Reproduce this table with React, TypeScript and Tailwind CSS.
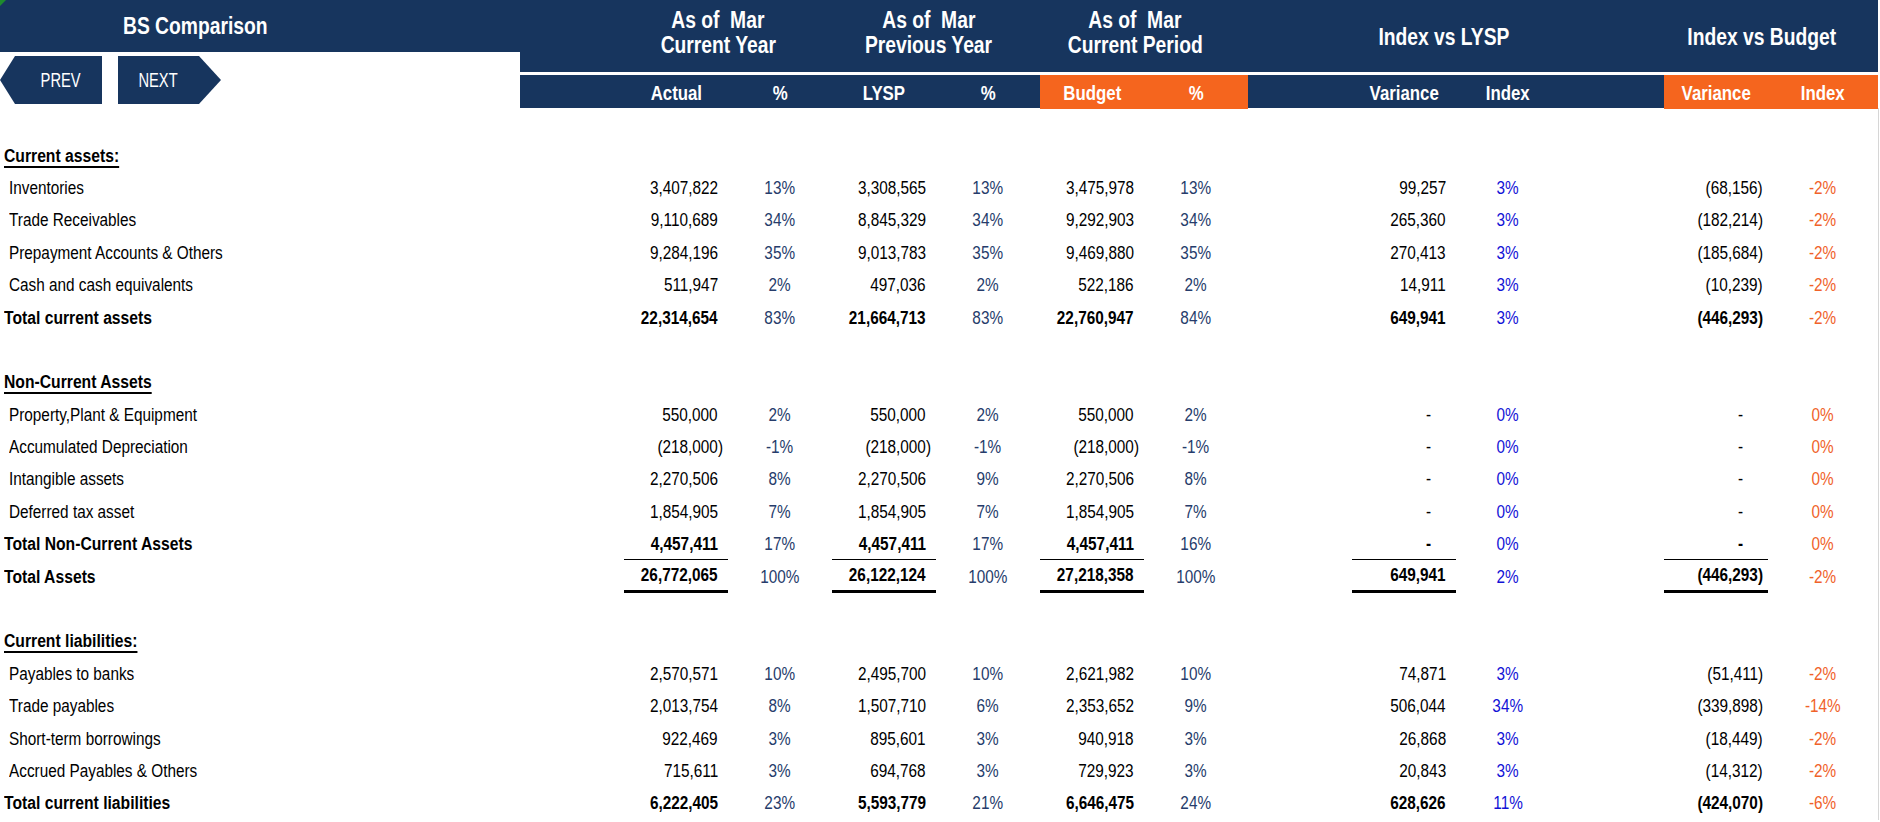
const FONT = "[font-family:'Liberation_Sans','Arial',sans-serif]";

type Vals = [string, string, string, string, string, string, string, string, string, string];

type Row =
  | { kind: "blank" }
  | { kind: "section"; label: string }
  | { kind: "item" | "total"; label: string; vals: Vals; line?: "thin" | "thick" };

const ROWS: Row[] = [
  { kind: "section", label: "Current assets:" },
  { kind: "item", label: "Inventories", vals: ["3,407,822", "13%", "3,308,565", "13%", "3,475,978", "13%", "99,257", "3%", "(68,156)", "-2%"] },
  { kind: "item", label: "Trade Receivables", vals: ["9,110,689", "34%", "8,845,329", "34%", "9,292,903", "34%", "265,360", "3%", "(182,214)", "-2%"] },
  { kind: "item", label: "Prepayment Accounts & Others", vals: ["9,284,196", "35%", "9,013,783", "35%", "9,469,880", "35%", "270,413", "3%", "(185,684)", "-2%"] },
  { kind: "item", label: "Cash and cash equivalents", vals: ["511,947", "2%", "497,036", "2%", "522,186", "2%", "14,911", "3%", "(10,239)", "-2%"] },
  { kind: "total", label: "Total current assets", vals: ["22,314,654", "83%", "21,664,713", "83%", "22,760,947", "84%", "649,941", "3%", "(446,293)", "-2%"] },
  { kind: "blank" },
  { kind: "section", label: "Non-Current Assets" },
  { kind: "item", label: "Property,Plant & Equipment", vals: ["550,000", "2%", "550,000", "2%", "550,000", "2%", "-", "0%", "-", "0%"] },
  { kind: "item", label: "Accumulated Depreciation", vals: ["(218,000)", "-1%", "(218,000)", "-1%", "(218,000)", "-1%", "-", "0%", "-", "0%"] },
  { kind: "item", label: "Intangible assets", vals: ["2,270,506", "8%", "2,270,506", "9%", "2,270,506", "8%", "-", "0%", "-", "0%"] },
  { kind: "item", label: "Deferred tax asset", vals: ["1,854,905", "7%", "1,854,905", "7%", "1,854,905", "7%", "-", "0%", "-", "0%"] },
  { kind: "total", label: "Total Non-Current Assets", line: "thin", vals: ["4,457,411", "17%", "4,457,411", "17%", "4,457,411", "16%", "-", "0%", "-", "0%"] },
  { kind: "total", label: "Total Assets", line: "thick", vals: ["26,772,065", "100%", "26,122,124", "100%", "27,218,358", "100%", "649,941", "2%", "(446,293)", "-2%"] },
  { kind: "blank" },
  { kind: "section", label: "Current liabilities:" },
  { kind: "item", label: "Payables to banks", vals: ["2,570,571", "10%", "2,495,700", "10%", "2,621,982", "10%", "74,871", "3%", "(51,411)", "-2%"] },
  { kind: "item", label: "Trade payables", vals: ["2,013,754", "8%", "1,507,710", "6%", "2,353,652", "9%", "506,044", "34%", "(339,898)", "-14%"] },
  { kind: "item", label: "Short-term borrowings", vals: ["922,469", "3%", "895,601", "3%", "940,918", "3%", "26,868", "3%", "(18,449)", "-2%"] },
  { kind: "item", label: "Accrued Payables & Others", vals: ["715,611", "3%", "694,768", "3%", "729,923", "3%", "20,843", "3%", "(14,312)", "-2%"] },
  { kind: "total", label: "Total current liabilities", vals: ["6,222,405", "23%", "5,593,779", "21%", "6,646,475", "24%", "628,626", "11%", "(424,070)", "-6%"] },
];

// Arial Narrow look: Liberation Sans squeezed horizontally
const NARROW_L = "inline-block origin-left scale-x-[0.82] whitespace-pre";
const NARROW_BOLD_L = "inline-block origin-left scale-x-[0.84] whitespace-pre";
const NARROW_R = "inline-block origin-right scale-x-[0.82] whitespace-pre";
const NARROW_C = "inline-block origin-center scale-x-[0.82] whitespace-pre";

const ROW_GRID = "grid h-[32.4px] grid-cols-[624px_repeat(11,104px)_110px]";
const HEAD_GRID = "grid grid-cols-[104px_repeat(11,104px)_110px]";

function NumCell({ v, bold, line }: { v: string; bold: boolean; line?: "thin" | "thick" }) {
  const pad = v === "-" ? "pr-[25px]" : v.startsWith("(") ? "pr-[5px]" : "pr-[10px]";
  const border = line === "thin" ? "border-b border-black" : line === "thick" ? "border-b-[3px] border-black" : "";
  return (
    <div className={`flex h-full items-center justify-end text-black ${pad} ${border} ${bold ? "font-bold" : ""}`}>
      <span className={NARROW_R}>{v}</span>
    </div>
  );
}

function PctCell({ v, color }: { v: string; color: string }) {
  return (
    <div className={`flex h-full items-center justify-center ${color}`}>
      <span className={NARROW_C}>{v}</span>
    </div>
  );
}

function TableRow({ row }: { row: Row }) {
  if (row.kind === "blank") return <div className="h-[32.4px]" />;
  if (row.kind === "section") {
    return (
      <div className="flex h-[32.4px] items-center pl-[4px]">
        <span className={`${NARROW_BOLD_L} font-bold text-black underline decoration-[1.5px] underline-offset-[4px]`}>
          {row.label}
        </span>
      </div>
    );
  }
  const bold = row.kind === "total";
  const [a, ap, l, lp, b, bp, v, vi, bv, bi] = row.vals;
  return (
    <div className={ROW_GRID}>
      <div className={`flex h-full items-center text-black ${bold ? "pl-[4px] font-bold" : "pl-[9px]"}`}>
        <span className={bold ? NARROW_BOLD_L : NARROW_L}>{row.label}</span>
      </div>
      <NumCell v={a} bold={bold} line={row.line} />
      <PctCell v={ap} color="text-[#263c6b]" />
      <NumCell v={l} bold={bold} line={row.line} />
      <PctCell v={lp} color="text-[#263c6b]" />
      <NumCell v={b} bold={bold} line={row.line} />
      <PctCell v={bp} color="text-[#263c6b]" />
      <div />
      <NumCell v={v} bold={bold} line={row.line} />
      <PctCell v={vi} color="text-[#1212d6]" />
      <div />
      <NumCell v={bv} bold={bold} line={row.line} />
      <PctCell v={bi} color="text-[#f0622a]" />
    </div>
  );
}

function GroupTitle({ lines, shift }: { lines: string[]; shift: string }) {
  return (
    <div
      className={`col-span-2 flex flex-col items-center justify-center text-[23.5px] font-bold leading-[25.5px] text-white ${shift} ${
        lines.length > 1 ? "pb-[6px]" : "pt-[4px]"
      }`}
    >
      {lines.map((t) => (
        <span key={t} className={NARROW_C}>
          {t}
        </span>
      ))}
    </div>
  );
}

function SubHead({ label, orange }: { label: string; orange?: boolean }) {
  return (
    <div className={`flex h-full items-center justify-center pt-[3px] ${orange ? "bg-[#f5651e]" : ""}`}>
      <span className={NARROW_C}>{label}</span>
    </div>
  );
}

export default function App() {
  return (
    <div className={`relative min-h-[822px] w-[1880px] bg-white ${FONT}`}>
      {/* excel cell marker */}
      <div className="absolute left-0 top-0 h-[6px] w-[6px] bg-[#1e8a2e] [clip-path:polygon(0_0,100%_0,0_100%)]" />

      {/* Header */}
      <div className="flex">
        <div className="w-[520px]">
          <div className="flex h-[52px] items-center bg-[#17355e] pl-[123px] pt-[2px] text-[23.5px] font-bold text-white">
            <span className={NARROW_L}>BS Comparison</span>
          </div>
          <div className="mt-[4px] flex gap-[16px] text-[21px] text-white">
            <div className="flex h-[48px] w-[102px] items-center justify-center bg-[#17355e] pl-[20px] [clip-path:polygon(15px_0,100%_0,100%_100%,15px_100%,0_50%)]">
              <span className="inline-block origin-center scale-x-[0.7]">PREV</span>
            </div>
            <div className="flex h-[48px] w-[103px] items-center justify-center bg-[#17355e] pr-[22px] [clip-path:polygon(0_0,81px_0,100%_50%,81px_100%,0_100%)]">
              <span className="inline-block origin-center scale-x-[0.7]">NEXT</span>
            </div>
          </div>
        </div>

        <div className="w-[1358px]">
          <div className={`${HEAD_GRID} h-[72px] bg-[#17355e]`}>
            <div />
            <GroupTitle lines={["As of  Mar", "Current Year"]} shift="pr-[20px]" />
            <GroupTitle lines={["As of  Mar", "Previous Year"]} shift="pr-[14px]" />
            <GroupTitle lines={["As of  Mar", "Current Period"]} shift="pr-[18px]" />
            <div />
            <GroupTitle lines={["Index vs LYSP"]} shift="pr-[24px]" />
            <div />
            <GroupTitle lines={["Index vs Budget"]} shift="pr-[18px]" />
          </div>
          <div className={`${HEAD_GRID} mt-[3px] h-[33px] bg-[#17355e] text-[20.5px] font-bold text-white`}>
            <div />
            <SubHead label="Actual" />
            <SubHead label="%" />
            <SubHead label="LYSP" />
            <SubHead label="%" />
            <SubHead label="Budget" orange />
            <SubHead label="%" orange />
            <div />
            <SubHead label="Variance" />
            <SubHead label="Index" />
            <div />
            <SubHead label="Variance" orange />
            <SubHead label="Index" orange />
          </div>
        </div>
      </div>

      {/* Table */}
      <div className="w-[1879px] border-r border-[#d6d6d6] pt-[31.4px] text-[18.7px]">
        {ROWS.map((row, i) => (
          <TableRow key={i} row={row} />
        ))}
      </div>
    </div>
  );
}
